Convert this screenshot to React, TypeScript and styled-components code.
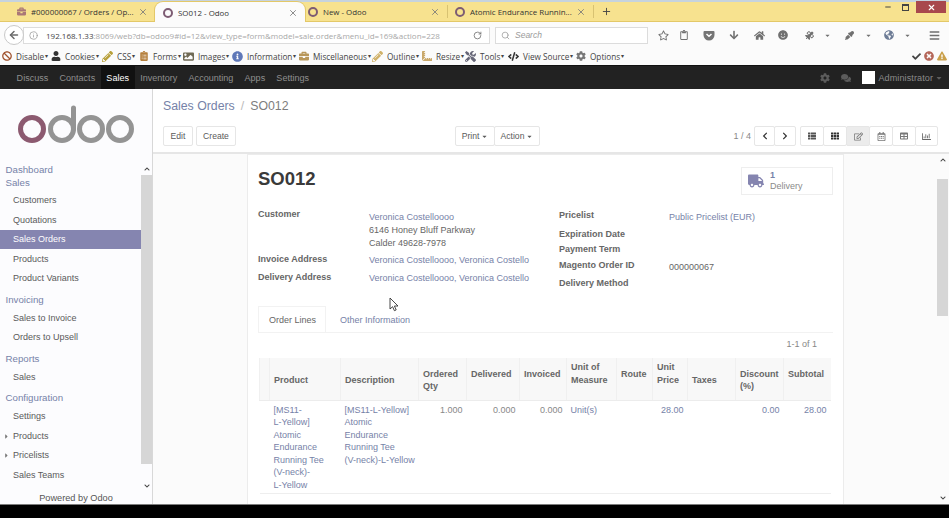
import * as React from 'react';
import styled, { createGlobalStyle } from 'styled-components';
import {
  FaBan, FaUser, FaPencilAlt, FaClipboardList, FaImage, FaInfoCircle, FaBriefcase, FaRulerCombined, FaTools, FaCode, FaCog,
  FaCheck, FaTimesCircle, FaExclamationTriangle, FaTruck, FaThList, FaTh, FaRegEdit, FaRegCalendarAlt, FaTable, FaRegChartBar,
  FaChevronLeft, FaChevronRight, FaCaretDown, FaChevronUp, FaChevronDown, FaCaretRight, FaArrowDown, FaHome, FaSmile,
  FaBars, FaRegStar, FaRegClipboard, FaEyeDropper, FaGlobeAmericas, FaSatellite, FaComments,
} from 'react-icons/fa';
import { LuArrowLeft, LuInfo, LuRotateCw, LuSearch, LuX, LuPlus, LuMinus } from 'react-icons/lu';

const LINK = '#7682a8';

const GlobalStyle = createGlobalStyle`
  html, body { margin: 0; padding: 0; height: 518px; overflow: hidden; background: #000; }
  body { font-family: "Liberation Sans", Arial, sans-serif; font-size: 9px; color: #555; }
  * { box-sizing: border-box; }
`;

const Page = styled.div`
  width: 949px;
  height: 518px;
  display: flex;
  flex-direction: column;
  position: relative;
  overflow: hidden;
`;

/* browser chrome */
const TabBar = styled.div`
  height: 22px;
  flex: none;
  display: flex;
  align-items: stretch;
  background: #f7e28f;
  border-top: 2px solid #c6d3de;
  border-bottom: 1px solid #e3c868;
  font-family: "Open Sans", "Liberation Sans", sans-serif;
  font-size: 7.9px;
`;

const Tab = styled.div<{ $w: number; $pl: number; $active?: boolean }>`
  width: ${(p) => p.$w}px;
  flex: none;
  display: flex;
  align-items: center;
  gap: 5px;
  padding: 0 7px 0 ${(p) => p.$pl}px;
  color: #333;
  background: ${(p) => (p.$active ? '#fbfbfb' : 'transparent')};
  border-radius: ${(p) => (p.$active ? '8px 8px 0 0' : '0')};
  box-shadow: ${(p) => (p.$active ? '0 0 0 1px #e3c868' : 'none')};
  height: ${(p) => (p.$active ? '21px' : 'auto')};
  span { flex: 1; min-width: 0; white-space: nowrap; }
  svg { flex: none; }
`;

const TabDivider = styled.i`
  width: 1px;
  margin: 3px 0;
  flex: none;
  background: #d8c272;
`;

const OdooRing = styled.i`
  width: 10px;
  height: 10px;
  flex: none;
  border: 2px solid #7d5c73;
  border-radius: 50%;
`;

const PlusBox = styled.div`
  width: 26px;
  display: flex;
  align-items: center;
  justify-content: center;
  border-left: 1px solid #d8c272;
  margin: 3px 0;
  color: #444;
`;

const TabSpacer = styled.div`
  flex: 1;
`;

const WinControls = styled.div`
  display: flex;
  align-items: flex-start;
  color: #444;
  margin-top: -1px;
`;

const WinButton = styled.div<{ $w: number; $close?: boolean }>`
  width: ${(p) => p.$w}px;
  height: 12px;
  display: flex;
  align-items: center;
  justify-content: center;
  color: ${(p) => (p.$close ? '#fff' : '#444')};
  background: ${(p) => (p.$close ? '#a8484d' : 'transparent')};
`;

const RestoreIcon = styled.i`
  width: 7px;
  height: 7px;
  border: 1px solid #444;
  border-top-width: 2px;
`;

const NavBar = styled.div`
  height: 22px;
  flex: none;
  display: flex;
  align-items: center;
  background: #fbfbfb;
  padding: 4px 0 0 4px;
  color: #666;
`;

const BackButton = styled.div`
  width: 20px;
  height: 20px;
  border-radius: 50%;
  background: #fff;
  border: 1px solid #c9c9c9;
  display: flex;
  align-items: center;
  justify-content: center;
  flex: none;
  z-index: 1;
  color: #6b6b6b;
`;

const UrlBox = styled.div`
  width: 467px;
  height: 17px;
  margin-left: -1px;
  flex: none;
  display: flex;
  align-items: center;
  gap: 8px;
  padding: 0 7px 0 5px;
  background: #fff;
  border: 1px solid #dcdcdc;
  font-size: 8px;
  white-space: nowrap;
  color: #a8a8a8;
  font-family: "Open Sans", "Liberation Sans", sans-serif;
  b { font-weight: 400; color: #444; }
  span { flex: 1; overflow: hidden; }
`;

const SearchBox = styled.div`
  width: 153px;
  height: 17px;
  margin-left: 5px;
  flex: none;
  display: flex;
  align-items: center;
  gap: 5px;
  padding: 0 5px;
  background: #fff;
  border: 1px solid #dcdcdc;
  font-style: italic;
  font-size: 8.5px;
  color: #9a9a9a;
`;

const ToolIcons = styled.div`
  flex: 1;
  display: flex;
  align-items: center;
  padding-left: 8px;
  color: #707070;
`;

const ToolIcon = styled.div<{ $ml?: number }>`
  width: 14px;
  margin-left: ${(p) => p.$ml ?? 0}px;
  flex: none;
  display: flex;
  align-items: center;
  justify-content: center;
`;

const BookmarkBar = styled.div`
  height: 21px;
  flex: none;
  display: flex;
  align-items: center;
  background: #fbfbfb;
  padding: 3px 0 0 2px;
  font-family: "Open Sans", "Liberation Sans", sans-serif;
  font-size: 8.2px;
  color: #444;
`;

const Bookmark = styled.div<{ $w: number }>`
  width: ${(p) => p.$w}px;
  flex: none;
  display: flex;
  align-items: center;
  gap: 4px;
  white-space: nowrap;
  svg { flex: none; }
  em { font-style: normal; font-size: 6px; margin-left: -3px; }
`;

const BookmarkEnd = styled.div`
  margin-left: auto;
  padding-right: 2px;
  display: flex;
  align-items: center;
  gap: 3px;
`;

/* odoo top menu */
const TopNav = styled.div`
  height: 24px;
  flex: none;
  display: flex;
  align-items: stretch;
  background: #222;
  padding-left: 11px;
  border-top: 1px solid #111;
  font-size: 9.05px;
`;

const TopLink = styled.div<{ $active?: boolean }>`
  display: flex;
  align-items: center;
  padding: 0 5.6px;
  color: ${(p) => (p.$active ? '#fff' : '#8f8f8f')};
  background: ${(p) => (p.$active ? '#111' : 'transparent')};
`;

const TopRight = styled.div`
  margin-left: auto;
  display: flex;
  align-items: center;
  gap: 11px;
  padding-right: 6px;
  color: #5c5c5c;
`;

const UserMenu = styled.div`
  display: flex;
  align-items: center;
`;

const Avatar = styled.i`
  width: 13px;
  height: 13px;
  background: #fff;
  margin-right: 3px;
`;

const UserName = styled.span`
  color: #8a8a8a;
  margin-right: 2px;
  letter-spacing: 0.1px;
`;

/* main */
const Main = styled.div`
  flex: none;
  height: 415px;
  display: flex;
  background: #fff;
`;

const Sidebar = styled.div`
  width: 153px;
  flex: none;
  display: flex;
  flex-direction: column;
  border-right: 1px solid #d8d8d8;
  background: #fcfcfe;
`;

const LogoBox = styled.div`
  height: 71.5px;
  flex: none;
  padding: 16px 0 0 17px;
`;

const MenuArea = styled.div`
  flex: 1;
  min-height: 0;
  display: flex;
  overflow: hidden;
`;

const Menu = styled.div`
  width: 141px;
  flex: none;
  padding-top: 2px;
  overflow: hidden;
`;

const MenuHead = styled.div<{ $gap?: number; $after?: number }>`
  height: 13px;
  line-height: 13px;
  margin-top: ${(p) => p.$gap ?? 0}px;
  margin-bottom: ${(p) => p.$after ?? 2.5}px;
  padding-left: 5.5px;
  color: ${LINK};
  font-size: 9.7px;
`;

const MenuItem = styled.div<{ $active?: boolean }>`
  height: 19.5px;
  display: flex;
  align-items: center;
  padding-left: 13px;
  position: relative;
  color: ${(p) => (p.$active ? '#fff' : '#5a5a5a')};
  background: ${(p) => (p.$active ? '#8585b0' : 'transparent')};
  svg { position: absolute; left: 3px; top: 6.5px; color: #777; }
`;

const Scrollbar = styled.div<{ $pt?: number }>`
  flex: 1;
  display: flex;
  flex-direction: column;
  align-items: center;
  padding-top: ${(p) => p.$pt ?? 0}px;
  color: #444;
`;

const ScrollArrow = styled.div`
  height: 12px;
  flex: none;
  display: flex;
  align-items: center;
  justify-content: center;
`;

const ScrollThumb = styled.div<{ $h: number; $mt?: number }>`
  width: 100%;
  height: ${(p) => p.$h}px;
  margin-top: ${(p) => p.$mt ?? 0}px;
  flex: none;
  background: #d6d6d6;
`;

const ScrollTrack = styled.div`
  flex: 1;
`;

const Powered = styled.div`
  height: 12px;
  flex: none;
  text-align: center;
  line-height: 12px;
  color: #555;
  font-size: 9.2px;
`;

const Workspace = styled.div`
  flex: 1;
  min-width: 0;
  display: flex;
  flex-direction: column;
`;

const ControlPanel = styled.div`
  height: 65px;
  flex: none;
  display: flex;
  flex-direction: column;
  padding: 9px 11px 0 10px;
  background: #fff;
  border-bottom: 2px solid #e6e6e6;
`;

const Crumbs = styled.div`
  height: 17px;
  line-height: 17px;
  font-size: 12.3px;
  color: #7d7d7d;
  span { color: ${LINK}; }
  i { font-style: normal; color: #bbb; margin: 0 6px; }
`;

const PanelRow = styled.div`
  margin-top: 11px;
  display: flex;
  align-items: center;
`;

const PanelLeft = styled.div`
  width: 292px;
  display: flex;
  gap: 3px;
`;

const PanelCentre = styled.div`
  display: flex;
`;

const PanelRight = styled.div`
  margin-left: auto;
  display: flex;
  align-items: center;
`;

const Pager = styled.span`
  color: #888;
  margin-right: 3px;
`;

const Btn = styled.div<{ $w: number; $pressed?: boolean; $joined?: boolean }>`
  width: ${(p) => p.$w}px;
  height: 20px;
  display: flex;
  align-items: center;
  justify-content: center;
  gap: 2px;
  background: ${(p) => (p.$pressed ? '#ececec' : '#fff')};
  border: 1px solid #e6e6e6;
  margin-left: ${(p) => (p.$joined ? -1 : 0)}px;
  border-radius: 2px;
  color: #5a5a5a;
  font-size: 8.6px;
`;

const BtnGroup = styled.div`
  display: flex;
  margin-left: 4px;
`;

const FormScroll = styled.div`
  flex: 1;
  min-height: 0;
  display: flex;
  background: #fbfbfb;
`;

const SheetArea = styled.div`
  width: 784px;
  flex: none;
  padding: 0 0 0 94px;
  overflow: hidden;
`;

const Sheet = styled.div`
  width: 597px;
  min-height: 100%;
  background: #fff;
  border: 1px solid #ececec;
  border-bottom: none;
  padding: 13px 10px 0 10px;
`;

const SheetHead = styled.div`
  display: flex;
  justify-content: space-between;
  height: 41px;
`;

const Title = styled.h1`
  margin: 0;
  font-size: 18.5px;
  line-height: 22px;
  color: #3a3a3a;
  font-weight: 700;
`;

const StatButton = styled.div`
  width: 92px;
  height: 28px;
  margin-top: -1px;
  display: flex;
  align-items: center;
  gap: 6px;
  padding-left: 6px;
  border: 1px solid #eee;
  color: #8585b0;
`;

const StatText = styled.div`
  line-height: 11px;
  color: #8a8a8a;
  b { display: block; color: ${LINK}; }
`;

const FormGroups = styled.div`
  display: grid;
  grid-template-columns: 301px 1fr;
`;

const FieldGrid = styled.div<{ $col: number; $mt?: number }>`
  display: grid;
  grid-template-columns: ${(p) => p.$col}px 1fr;
  align-content: start;
  margin-top: ${(p) => p.$mt ?? 0}px;
`;

const Label = styled.div<{ $h: number }>`
  height: ${(p) => p.$h}px;
  font-weight: 700;
  color: #666;
`;

const Value = styled.div<{ $h: number; $pt?: number }>`
  height: ${(p) => p.$h}px;
  padding-top: ${(p) => p.$pt ?? 0}px;
  line-height: 13px;
  color: #666;
`;

const Link = styled.div`
  color: ${LINK};
`;

const Tabs = styled.div`
  margin-top: 14px;
  height: 27px;
  display: flex;
  align-items: stretch;
  border-bottom: 1px solid #f2f2f2;
`;

const TabLink = styled.div<{ $active?: boolean }>`
  width: ${(p) => (p.$active ? 68 : 92)}px;
  display: flex;
  align-items: center;
  padding-left: ${(p) => (p.$active ? 10 : 13)}px;
  color: ${(p) => (p.$active ? '#666' : LINK)};
  border: 1px solid ${(p) => (p.$active ? '#f2f2f2' : 'transparent')};
  border-bottom: none;
`;

const ListPager = styled.div`
  height: 25px;
  line-height: 23px;
  text-align: right;
  padding-right: 16px;
  color: #888;
`;

const LinesTable = styled.table`
  width: 571px;
  margin-left: 1px;
  table-layout: fixed;
  border-collapse: collapse;
  border-bottom: 1px solid #eee;
`;

const Th = styled.th`
  height: 42px;
  padding: 3px 4px 0;
  font-size: 9px;
  line-height: 12.7px;
  text-align: left;
  font-weight: 700;
  color: #666;
  background: #f8f8f8;
  border-left: 1px solid #f0f0f0;
  border-bottom: 1px solid #ececec;
`;

const Td = styled.td<{ $right?: boolean; $plain?: boolean; $nowrap?: boolean }>`
  vertical-align: top;
  padding: 3px 4px 2px;
  line-height: 12.5px;
  color: ${(p) => (p.$plain ? '#888' : LINK)};
  text-align: ${(p) => (p.$right ? 'right' : 'left')};
  white-space: ${(p) => (p.$nowrap ? 'nowrap' : 'normal')};
`;

const RightScroll = styled(Scrollbar)`
  padding-right: 1px;
`;

const Cursor = styled.svg`
  position: absolute;
  left: 389px;
  top: 297px;
`;

const BottomBar = styled.div`
  flex: 1;
  background: #000;
  border-top: 1px solid #7c7c7c;
`;

const bookmarks: [number, React.ReactNode, string][] = [
  [49, <FaBan size={10} color="#a0522d" />, 'Disable'],
  [51, <FaUser size={10} color="#333" />, 'Cookies'],
  [37, <FaPencilAlt size={11} color="#b8a03a" />, 'CSS'],
  [44, <FaClipboardList size={10} color="#b5803e" />, 'Forms'],
  [49, <FaImage size={11} color="#6f6a55" />, 'Images'],
  [67, <FaInfoCircle size={11} color="#5f78b8" />, 'Information'],
  [73, <FaBriefcase size={10} color="#b8975a" />, 'Miscellaneous'],
  [50, <FaPencilAlt size={11} color="#d0b26a" />, 'Outline'],
  [43, <FaRulerCombined size={10} color="#c9a86a" />, 'Resize'],
  [43, <FaTools size={11} color="#667" />, 'Tools'],
  [68, <FaCode size={11} color="#333" />, 'View Source'],
  [50, <FaCog size={10} color="#777" />, 'Options'],
];

// the blank lines keep each heading on the same baseline as the reference's taller cells
const columns: [number, React.ReactNode][] = [
  [10, ''],
  [71, 'Product'],
  [78, 'Description'],
  [48, <>Ordered<br />Qty</>],
  [53, <>Delivered<br />&nbsp;</>],
  [47, <>Invoiced<br />&nbsp;</>],
  [50, <>Unit of<br />Measure<br />&nbsp;</>],
  [36, <>Route<br />&nbsp;</>],
  [35, <>Unit<br />Price<br />&nbsp;</>],
  [48, 'Taxes'],
  [48, <>Discount<br />(%)</>],
  [47, <>Subtotal<br />&nbsp;</>],
];

function OdooLogo() {
  return (
    <svg width="118" height="40" viewBox="0 0 118 40">
      <g fill="none" strokeWidth="5">
        <circle cx="15" cy="24" r="11.5" stroke="#8c5a70" />
        <g stroke="#949494">
          <circle cx="45" cy="24" r="11.5" />
          <path d="M56.500 24V3" strokeLinecap="round" />
          <circle cx="74" cy="24" r="11.500" />
          <circle cx="103" cy="24" r="11.500" />
        </g>
      </g>
    </svg>
  );
}

function PocketIcon() {
  return (
    <svg width="12" height="11" viewBox="0 0 12 11">
      <path d="M1.500 1h9A1 1 0 0 1 11.500 2v3a5.500 5.500 0 0 1-11 0V2a1 1 0 0 1 1-1z" fill="#757575" />
      <path d="M3.500 4 6 6.300 8.500 4" fill="none" stroke="#fff" strokeWidth="1.500" />
    </svg>
  );
}

export default function App() {
  return (
    <Page>
      <GlobalStyle />
      <TabBar>
        <Tab $w={155} $pl={17}>
          <FaBriefcase size={9} color="#a77" />
          <span>#000000067 / Orders / Op...</span>
          <LuX size={10} color="#777" />
        </Tab>
        <Tab $w={150} $active $pl={8}>
          <OdooRing />
          <span>SO012 - Odoo</span>
          <LuX size={10} color="#777" />
        </Tab>
        <Tab $w={142} $pl={3}>
          <OdooRing />
          <span>New - Odoo</span>
          <LuX size={10} color="#777" />
        </Tab>
        <TabDivider />
        <Tab $w={145} $pl={7}>
          <OdooRing />
          <span>Atomic Endurance Runnin...</span>
          <LuX size={10} color="#777" />
        </Tab>
        <PlusBox><LuPlus size={11} /></PlusBox>
        <TabSpacer />
        <WinControls>
          <WinButton $w={15}><LuMinus size={8} strokeWidth={3} /></WinButton>
          <WinButton $w={21}><RestoreIcon /></WinButton>
          <WinButton $w={30} $close><LuX size={9} strokeWidth={3} /></WinButton>
          <WinButton $w={3} />
        </WinControls>
      </TabBar>
      <NavBar>
        <BackButton><LuArrowLeft size={12} strokeWidth={3} /></BackButton>
        <UrlBox>
          <LuInfo size={9} color="#999" />
          <span><b>192.168.1.33</b>:8069/web?db=odoo9#id=12&amp;view_type=form&amp;model=sale.order&amp;menu_id=169&amp;action=228</span>
          <LuRotateCw size={9} color="#666" />
        </UrlBox>
        <SearchBox><LuSearch size={9} />Search</SearchBox>
        <ToolIcons>
          <ToolIcon><FaRegStar size={11} /></ToolIcon>
          <ToolIcon $ml={7}><FaRegClipboard size={10} /></ToolIcon>
          <ToolIcon $ml={11}><PocketIcon /></ToolIcon>
          <ToolIcon $ml={11}><FaArrowDown size={10} /></ToolIcon>
          <ToolIcon $ml={11}><FaHome size={11} /></ToolIcon>
          <ToolIcon $ml={10}><FaSmile size={10} /></ToolIcon>
          <ToolIcon $ml={12}><FaSatellite size={9} /></ToolIcon>
          <ToolIcon $ml={4}><FaCaretDown size={7} /></ToolIcon>
          <ToolIcon $ml={8}><FaEyeDropper size={9} /></ToolIcon>
          <ToolIcon $ml={5}><FaCaretDown size={7} /></ToolIcon>
          <ToolIcon $ml={7}><FaGlobeAmericas size={10} color="#6d7c96" /></ToolIcon>
          <ToolIcon $ml={4}><FaCaretDown size={7} /></ToolIcon>
          <ToolIcon $ml={13}><FaBars size={11} /></ToolIcon>
        </ToolIcons>
      </NavBar>
      <BookmarkBar>
        {bookmarks.map(([w, icon, label]) => (
          <Bookmark key={label} $w={w}>{icon}{label}<em>▾</em></Bookmark>
        ))}
        <BookmarkEnd>
          <FaCheck size={9} color="#444" />
          <FaTimesCircle size={10} color="#b5675a" />
          <FaExclamationTriangle size={10} color="#caa04a" />
        </BookmarkEnd>
      </BookmarkBar>
      <TopNav>
        <TopLink>Discuss</TopLink>
        <TopLink>Contacts</TopLink>
        <TopLink $active>Sales</TopLink>
        <TopLink>Inventory</TopLink>
        <TopLink>Accounting</TopLink>
        <TopLink>Apps</TopLink>
        <TopLink>Settings</TopLink>
        <TopRight>
          <FaCog size={10} />
          <FaComments size={10} />
          <UserMenu>
            <Avatar />
            <UserName>Administrator</UserName>
            <FaCaretDown size={8} />
          </UserMenu>
        </TopRight>
      </TopNav>
      <Main>
        <Sidebar>
          <LogoBox><OdooLogo /></LogoBox>
          <MenuArea>
            <Menu>
              <MenuHead $after={0}>Dashboard</MenuHead>
              <MenuHead $after={2}>Sales</MenuHead>
              <MenuItem>Customers</MenuItem>
              <MenuItem>Quotations</MenuItem>
              <MenuItem $active>Sales Orders</MenuItem>
              <MenuItem>Products</MenuItem>
              <MenuItem>Product Variants</MenuItem>
              <MenuHead $gap={4.5}>Invoicing</MenuHead>
              <MenuItem>Sales to Invoice</MenuItem>
              <MenuItem>Orders to Upsell</MenuItem>
              <MenuHead $gap={4.5}>Reports</MenuHead>
              <MenuItem>Sales</MenuItem>
              <MenuHead $gap={4.5}>Configuration</MenuHead>
              <MenuItem>Settings</MenuItem>
              <MenuItem><FaCaretRight size={7} />Products</MenuItem>
              <MenuItem><FaCaretRight size={7} />Pricelists</MenuItem>
              <MenuItem>Sales Teams</MenuItem>
            </Menu>
            <Scrollbar $pt={2.5}>
              <ScrollArrow><FaChevronUp size={6} /></ScrollArrow>
              <ScrollThumb $h={289} />
              <ScrollTrack />
              <ScrollArrow><FaChevronDown size={6} /></ScrollArrow>
            </Scrollbar>
          </MenuArea>
          <Powered>Powered by Odoo</Powered>
        </Sidebar>
        <Workspace>
          <ControlPanel>
            <Crumbs><span>Sales Orders</span><i>/</i>SO012</Crumbs>
            <PanelRow>
              <PanelLeft>
                <Btn $w={30}>Edit</Btn>
                <Btn $w={40}>Create</Btn>
              </PanelLeft>
              <PanelCentre>
                <Btn $w={40}>Print <FaCaretDown size={7} /></Btn>
                <Btn $w={46} $joined>Action <FaCaretDown size={7} /></Btn>
              </PanelCentre>
              <PanelRight>
                <Pager>1 / 4</Pager>
                <Btn $w={21}><FaChevronLeft size={8} color="#333" /></Btn>
                <Btn $w={22} $joined><FaChevronRight size={8} color="#333" /></Btn>
                <BtnGroup>
                  <Btn $w={24}><FaThList size={8} color="#555" /></Btn>
                  <Btn $w={24} $joined><FaTh size={8} color="#333" /></Btn>
                  <Btn $w={24} $joined $pressed><FaRegEdit size={9} color="#777" /></Btn>
                  <Btn $w={24} $joined><FaRegCalendarAlt size={9} color="#777" /></Btn>
                  <Btn $w={24} $joined><FaTable size={8} color="#777" /></Btn>
                  <Btn $w={23} $joined><FaRegChartBar size={9} color="#666" /></Btn>
                </BtnGroup>
              </PanelRight>
            </PanelRow>
          </ControlPanel>
          <FormScroll>
            <SheetArea>
              <Sheet>
                <SheetHead>
                  <Title>SO012</Title>
                  <StatButton>
                    <FaTruck size={16} />
                    <StatText><b>1</b>Delivery</StatText>
                  </StatButton>
                </SheetHead>
                <FormGroups>
                  <FieldGrid $col={111}>
                    <Label $h={45}>Customer</Label>
                    <Value $h={45} $pt={2}><Link>Veronica Costelloooo</Link>6146 Honey Bluff Parkway<br />Calder 49628-7978</Value>
                    <Label $h={18}>Invoice Address</Label>
                    <Value $h={18}><Link>Veronica Costelloooo, Veronica Costello</Link></Value>
                    <Label $h={18}>Delivery Address</Label>
                    <Value $h={18}><Link>Veronica Costelloooo, Veronica Costello</Link></Value>
                  </FieldGrid>
                  <FieldGrid $col={110} $mt={1}>
                    <Label $h={19}>Pricelist</Label>
                    <Value $h={19} $pt={1}><Link>Public Pricelist (EUR)</Link></Value>
                    <Label $h={15}>Expiration Date</Label>
                    <Value $h={15} />
                    <Label $h={16}>Payment Term</Label>
                    <Value $h={16} />
                    <Label $h={18}>Magento Order ID</Label>
                    <Value $h={18} $pt={1}>000000067</Value>
                    <Label $h={14}>Delivery Method</Label>
                    <Value $h={14} />
                  </FieldGrid>
                </FormGroups>
                <Tabs>
                  <TabLink $active>Order Lines</TabLink>
                  <TabLink>Other Information</TabLink>
                </Tabs>
                <ListPager>1-1 of 1</ListPager>
                <LinesTable>
                  <colgroup>
                    {columns.map(([w], i) => <col key={i} width={w} />)}
                  </colgroup>
                  <thead>
                    <tr>{columns.map(([, h], i) => <Th key={i}>{h}</Th>)}</tr>
                  </thead>
                  <tbody>
                    <tr>
                      <Td />
                      <Td>[MS11-<br />L-Yellow]<br />Atomic<br />Endurance<br />Running Tee<br />(V-neck)-<br />L-Yellow</Td>
                      <Td $nowrap>[MS11-L-Yellow]<br />Atomic<br />Endurance<br />Running Tee<br />(V-neck)-L-Yellow</Td>
                      <Td $right $plain>1.000</Td>
                      <Td $right $plain>0.000</Td>
                      <Td $right $plain>0.000</Td>
                      <Td>Unit(s)</Td>
                      <Td />
                      <Td $right>28.00</Td>
                      <Td />
                      <Td $right>0.00</Td>
                      <Td $right>28.00</Td>
                    </tr>
                  </tbody>
                </LinesTable>
              </Sheet>
            </SheetArea>
            <RightScroll>
              <ScrollArrow><FaChevronUp size={6} /></ScrollArrow>
              <ScrollThumb $h={137} $mt={13} />
              <ScrollTrack />
              <ScrollArrow><FaChevronDown size={6} /></ScrollArrow>
            </RightScroll>
          </FormScroll>
        </Workspace>
      </Main>
      <BottomBar />
      <Cursor width="10" height="15" viewBox="0 0 10 15">
        <path d="M1 1v11l2.600-2.300 1.800 4 1.800-.8-1.800-3.900H9z" fill="#fff" stroke="#333" strokeWidth="0.9" />
      </Cursor>
    </Page>
  );
}
